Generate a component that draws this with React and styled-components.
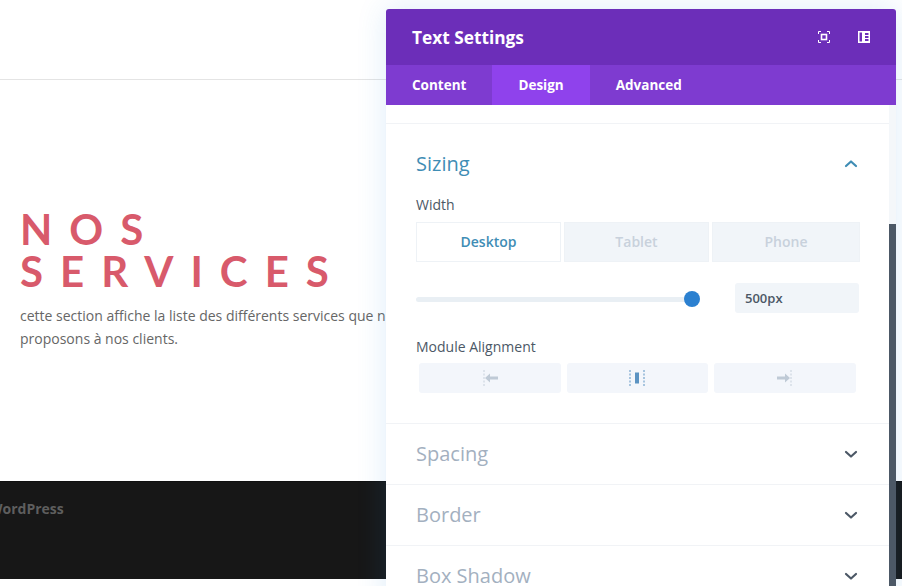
import React from "react";
import styled, { createGlobalStyle } from "styled-components";

const GlobalStyle = createGlobalStyle`
  html, body {
    margin: 0;
    padding: 0;
    background: #ffffff;
    overflow: hidden;
  }
  * {
    box-sizing: border-box;
  }
`;

const Page = styled.div`
  position: relative;
  width: 902px;
  height: 586px;
  overflow: hidden;
  background: #ffffff;
  font-family: "Open Sans", "Liberation Sans", sans-serif;
`;

const TopBar = styled.header`
  height: 80px;
  border-bottom: 1px solid #e4e4e4;
`;

const Hero = styled.section`
  height: 401px;
  padding: 128px 0 0 20px;
`;

const Heading = styled.h1`
  margin: 0;
  width: 350px;
  font-family: "Lato", "Open Sans", sans-serif;
  font-size: 42px;
  font-weight: 700;
  line-height: 42px;
  letter-spacing: 17px;
  color: #d85a6b;
`;

const Intro = styled.p`
  margin: 12px 0 0;
  width: 450px;
  font-size: 14px;
  line-height: 23px;
  color: #666666;
`;

const Footer = styled.footer`
  height: 98px;
  background: #171717;
  border-top: 1px solid #101010;
  overflow: hidden;
`;

const Credit = styled.div`
  margin: 17px 0 0 -11px;
  font-size: 14px;
  font-weight: 700;
  line-height: 20px;
  color: #5e5e5e;
`;

const Panel = styled.aside`
  position: absolute;
  top: 9px;
  left: 386px;
  width: 510px;
  height: 600px;
  display: flex;
  flex-direction: column;
  background: #ffffff;
  border-radius: 3px 3px 0 0;
  box-shadow: 0 0 30px rgba(43, 135, 218, 0.16);
`;

const PanelHeader = styled.div`
  height: 56px;
  flex: none;
  display: flex;
  align-items: center;
  justify-content: space-between;
  padding: 0 26px;
  background: #6c2eb9;
  border-radius: 3px 3px 0 0;
`;

const PanelTitle = styled.h2`
  margin: 0;
  font-size: 17.3px;
  font-weight: 700;
  color: #ffffff;
`;

const HeaderIcons = styled.div`
  display: flex;
  gap: 28px;
`;

const TabBar = styled.nav`
  height: 40px;
  flex: none;
  display: flex;
  background: #7e3bd0;
`;

const Tab = styled.div`
  padding: 0 26px;
  font-size: 13.5px;
  font-weight: 700;
  line-height: 40px;
  color: #ffffff;
  background: ${(p) => (p.$active ? "#8f42ec" : "transparent")};
`;

const PanelBody = styled.div`
  flex: 1;
  min-height: 0;
  display: flex;
`;

const Scroll = styled.div`
  flex: 1;
  min-width: 0;
  padding-top: 18px;
`;

const Track = styled.div`
  width: 7px;
  flex: none;
  padding-top: 119px;
  background: #f4f7fa;
`;

const Thumb = styled.div`
  height: 100%;
  background: #4c5866;
`;

const Group = styled.section`
  padding: ${(p) => (p.$open ? "27px 29px 30px 30px" : "17px 29px 17px 30px")};
  border-top: 1px solid #f1f3f6;
`;

const GroupHead = styled.div`
  height: 26px;
  display: flex;
  align-items: center;
  justify-content: space-between;
`;

const GroupTitle = styled.h3`
  margin: 0;
  font-size: 20px;
  font-weight: 400;
  line-height: 26px;
  color: ${(p) => (p.$open ? "#3f8db5" : "#a3b0bf")};
`;

const FieldLabel = styled.div`
  margin-top: ${(p) => p.$gap}px;
  font-size: 14px;
  font-weight: 400;
  line-height: 20px;
  color: #4c5866;
`;

const DeviceTabs = styled.div`
  margin-top: 7px;
  display: grid;
  grid-template-columns: 145px 145px 148px;
  gap: 3px;
`;

const DeviceTab = styled.div`
  height: 40px;
  text-align: center;
  font-size: 14px;
  font-weight: 600;
  line-height: 38px;
  color: ${(p) => (p.$active ? "#3f8db5" : "#c8d1dc")};
  background: ${(p) => (p.$active ? "#ffffff" : "#f1f5f9")};
  border: 1px solid #eef2f6;
`;

const SliderRow = styled.div`
  margin-top: 21px;
  display: flex;
  align-items: center;
  gap: 35px;
`;

const Slider = styled.div`
  position: relative;
  width: 284px;
  height: 5px;
  margin-top: 2px;
  background: #e9eff4;
  border-radius: 3px;
`;

const Knob = styled.div`
  position: absolute;
  top: -6px;
  right: 0;
  width: 16px;
  height: 16px;
  border-radius: 50%;
  background: #2b80d0;
`;

const ValueBox = styled.div`
  width: 124px;
  height: 30px;
  padding-left: 10px;
  font-size: 13px;
  font-weight: 600;
  line-height: 30px;
  color: #4c5866;
  background: #f1f5f9;
  border-radius: 3px;
`;

const AlignRow = styled.div`
  margin: 6px 4px 0 3px;
  display: grid;
  grid-template-columns: repeat(3, 1fr);
  gap: 6px;
`;

const AlignButton = styled.div`
  height: 30px;
  display: flex;
  align-items: center;
  justify-content: center;
  background: #f3f6fb;
  border-radius: 3px;
`;

const Chevron = ({ up, color }) => (
  <svg width="18" height="18" viewBox="0 0 18 18" fill="none">
    <polyline
      points={up ? "4,11 9,6.5 14,11" : "4,7 9,11.5 14,7"}
      stroke={color}
      strokeWidth="2.2"
      strokeLinecap="round"
      strokeLinejoin="round"
    />
  </svg>
);

const FocusIcon = () => (
  <svg width="12" height="12" viewBox="0 0 12 12" fill="none" stroke="#fff">
    <path d="M.5 3V.5H3M9 .5h2.5V3M11.5 9v2.5H9M3 11.5H.5V9" />
    <rect x="3.5" y="3.5" width="5" height="5" strokeWidth="1.6" />
  </svg>
);

const SplitIcon = () => (
  <svg width="12" height="12" viewBox="0 0 12 12">
    <path
      fill="#fff"
      fillRule="evenodd"
      d="M0 0h12v12H0zM1.5 1.5v9H4v-9zM7 2v2h3.5V2zM7 5v2h3.5V5zM7 8v2h3.5V8z"
    />
  </svg>
);

const AlignLeftIcon = () => (
  <svg width="18" height="16" viewBox="0 0 18 16">
    <line x1="3" y1="0" x2="3" y2="16" stroke="#c6d0db" strokeDasharray="2 1.5" />
    <path fill="#bfcad6" d="M4 8l5-4.5V6.500h8v3H9v3z" />
  </svg>
);

const AlignCenterIcon = () => (
  <svg width="16" height="16" viewBox="0 0 16 16">
    <line x1="1" y1="0" x2="1" y2="16" stroke="#5b93c2" strokeDasharray="2 1.5" />
    <line x1="15" y1="0" x2="15" y2="16" stroke="#5b93c2" strokeDasharray="2 1.5" />
    <rect x="6" y="2.500" width="4" height="11" fill="#5b93c2" />
  </svg>
);

const AlignRightIcon = () => (
  <svg width="18" height="16" viewBox="0 0 18 16">
    <line x1="15" y1="0" x2="15" y2="16" stroke="#c6d0db" strokeDasharray="2 1.5" />
    <path fill="#bfcad6" d="M14 8l-5-4.500V6.500H1v3h8v3z" />
  </svg>
);

const ClosedGroup = ({ title }) => (
  <Group>
    <GroupHead>
      <GroupTitle>{title}</GroupTitle>
      <Chevron color="#4c5866" />
    </GroupHead>
  </Group>
);

export default function App() {
  return (
    <Page>
      <GlobalStyle />
      <TopBar />
      <Hero>
        <Heading>NOS SERVICES</Heading>
        <Intro>
          cette section affiche la liste des différents services que nous
          proposons à nos clients.
        </Intro>
      </Hero>
      <Footer>
        <Credit>WordPress</Credit>
      </Footer>

      <Panel>
        <PanelHeader>
          <PanelTitle>Text Settings</PanelTitle>
          <HeaderIcons>
            <FocusIcon />
            <SplitIcon />
          </HeaderIcons>
        </PanelHeader>
        <TabBar>
          <Tab>Content</Tab>
          <Tab $active>Design</Tab>
          <Tab>Advanced</Tab>
        </TabBar>
        <PanelBody>
          <Scroll>
            <Group $open>
              <GroupHead>
                <GroupTitle $open>Sizing</GroupTitle>
                <Chevron up color="#3f8db5" />
              </GroupHead>
              <FieldLabel $gap={18}>Width</FieldLabel>
              <DeviceTabs>
                <DeviceTab $active>Desktop</DeviceTab>
                <DeviceTab>Tablet</DeviceTab>
                <DeviceTab>Phone</DeviceTab>
              </DeviceTabs>
              <SliderRow>
                <Slider>
                  <Knob />
                </Slider>
                <ValueBox>500px</ValueBox>
              </SliderRow>
              <FieldLabel $gap={24}>Module Alignment</FieldLabel>
              <AlignRow>
                <AlignButton>
                  <AlignLeftIcon />
                </AlignButton>
                <AlignButton>
                  <AlignCenterIcon />
                </AlignButton>
                <AlignButton>
                  <AlignRightIcon />
                </AlignButton>
              </AlignRow>
            </Group>
            <ClosedGroup title="Spacing" />
            <ClosedGroup title="Border" />
            <ClosedGroup title="Box Shadow" />
          </Scroll>
          <Track>
            <Thumb />
          </Track>
        </PanelBody>
      </Panel>
    </Page>
  );
}
